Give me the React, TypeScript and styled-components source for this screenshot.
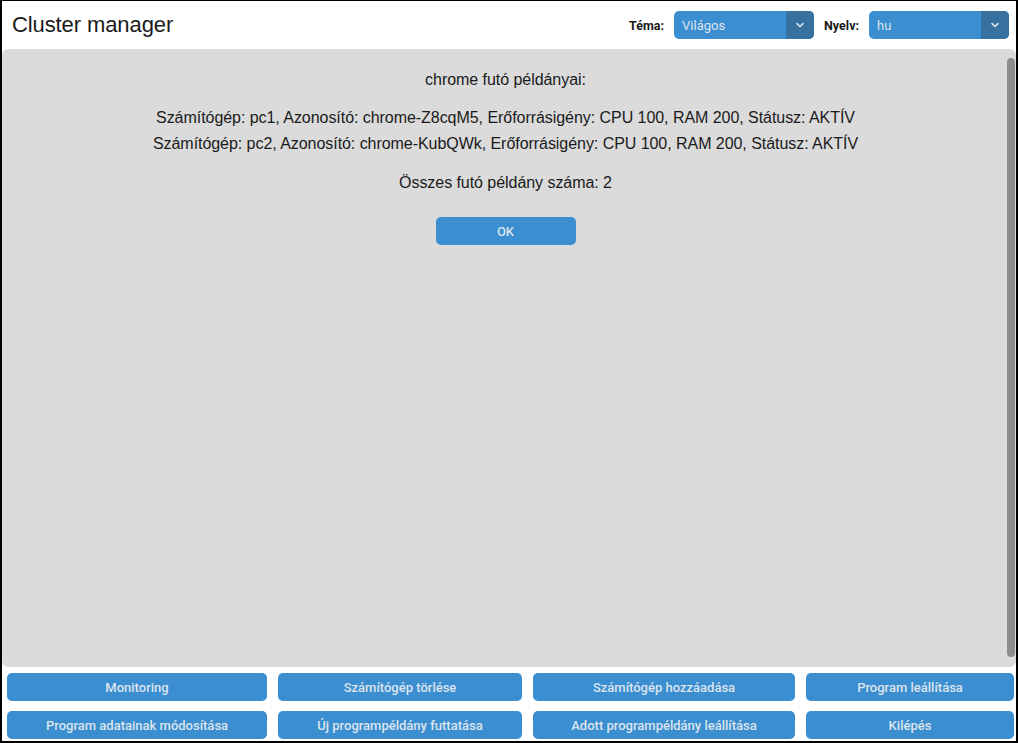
import React from "react";
import styled, { createGlobalStyle } from "styled-components";

const GlobalStyle = createGlobalStyle`
  html, body { margin: 0; padding: 0; background: #ffffff; }
  * { box-sizing: border-box; }
`;

const Frame = styled.div`
  width: 1018px;
  height: 743px;
  display: flex;
  flex-direction: column;
  background: #ffffff;
  border-style: solid;
  border-color: #000000;
  border-width: 1px 2px 2px 2px;
  font-family: Roboto, "Liberation Sans", sans-serif;
`;

const Header = styled.header`
  height: 48px;
  flex: none;
  display: flex;
  align-items: center;
  padding: 0 7px 0 10px;
`;

const Title = styled.h1`
  margin: 0;
  flex: 1;
  font-family: "Liberation Sans", Arial, sans-serif;
  font-weight: 400;
  font-size: 22px;
  letter-spacing: -0.1px;
  color: #1a1a1a;
`;

const Label = styled.span`
  font-size: 12.5px;
  font-weight: 700;
  color: #1a1a1a;
  margin-right: 10px;
`;

const Select = styled.div`
  width: 140px;
  height: 28px;
  display: flex;
  border-radius: 5px;
  overflow: hidden;
  background: #3b8ed0;
  color: #dce4ee;
  font-size: 13px;
  & + ${Label} { margin-left: 10px; }
`;

const SelectValue = styled.span`
  flex: 1;
  display: flex;
  align-items: center;
  padding-left: 8px;
`;

const SelectArrow = styled.span`
  width: 28px;
  display: flex;
  align-items: center;
  justify-content: center;
  background: #36719f;
`;

const Panel = styled.main`
  flex: 1;
  min-height: 0;
  display: flex;
  background: #dbdbdb;
  border-radius: 6px;
  overflow: hidden;
`;

const PanelContent = styled.div`
  flex: 1;
  display: flex;
  flex-direction: column;
  align-items: center;
  padding: 18px 0 0 4px;
  font-family: "Liberation Sans", Arial, sans-serif;
  font-size: 16px;
  line-height: 26px;
  letter-spacing: -0.05px;
  color: #1a1a1a;
`;

const ScrollTrack = styled.div`
  width: 11px;
  flex: none;
  display: flex;
  padding: 9px 1px 10px 2px;
`;

const ScrollThumb = styled.div`
  flex: 1;
  background: #8c8c8c;
  border-radius: 4px;
`;

const Line = styled.p<{ $gap?: number }>`
  margin: ${(p) => p.$gap ?? 0}px 0 0 0;
  text-align: center;
`;

const InstanceList = styled.div`
  margin-top: 12px;
  display: flex;
  flex-direction: column;
  align-items: center;
`;

const Button = styled.button`
  height: 28px;
  border: none;
  border-radius: 5px;
  background: #3b8ed0;
  color: #dce4ee;
  font-family: Roboto, "Liberation Sans", sans-serif;
  font-size: 13px;
  font-weight: 500;
  letter-spacing: 0;
  padding: 0 8px;
  cursor: pointer;
`;

const OkButton = styled(Button)`
  width: 140px;
  margin-top: 21px;
`;

const ButtonGrid = styled.nav`
  flex: none;
  display: grid;
  grid-template-columns: 260fr 244fr 262fr 208fr;
  gap: 10px 11px;
  padding: 6px 2px 2px 5px;
`;

const Chevron = () => (
  <svg width="10" height="6" viewBox="0 0 10 6">
    <polyline points="1.5,1.2 5,4.5 8.5,1.2" fill="none" stroke="#dce4ee" strokeWidth="1.6" />
  </svg>
);

const instances = [
  "Számítógép: pc1, Azonosító: chrome-Z8cqM5, Erőforrásigény: CPU 100, RAM 200, Státusz: AKTÍV",
  "Számítógép: pc2, Azonosító: chrome-KubQWk, Erőforrásigény: CPU 100, RAM 200, Státusz: AKTÍV",
];

const actions = [
  "Monitoring",
  "Számítógép törlése",
  "Számítógép hozzáadása",
  "Program leállítása",
  "Program adatainak módosítása",
  "Új programpéldány futtatása",
  "Adott programpéldány leállítása",
  "Kilépés",
];

export default function App() {
  return (
    <>
      <GlobalStyle />
      <Frame>
        <Header>
          <Title>Cluster manager</Title>
          <Label>Téma:</Label>
          <Select>
            <SelectValue>Világos</SelectValue>
            <SelectArrow><Chevron /></SelectArrow>
          </Select>
          <Label>Nyelv:</Label>
          <Select>
            <SelectValue>hu</SelectValue>
            <SelectArrow><Chevron /></SelectArrow>
          </Select>
        </Header>
        <Panel>
          <PanelContent>
            <Line>chrome futó példányai:</Line>
            <InstanceList>
              {instances.map((t) => (
                <Line key={t}>{t}</Line>
              ))}
            </InstanceList>
            <Line $gap={13}>Összes futó példány száma: 2</Line>
            <OkButton>OK</OkButton>
          </PanelContent>
          <ScrollTrack>
            <ScrollThumb />
          </ScrollTrack>
        </Panel>
        <ButtonGrid>
          {actions.map((a) => (
            <Button key={a}>{a}</Button>
          ))}
        </ButtonGrid>
      </Frame>
    </>
  );
}
